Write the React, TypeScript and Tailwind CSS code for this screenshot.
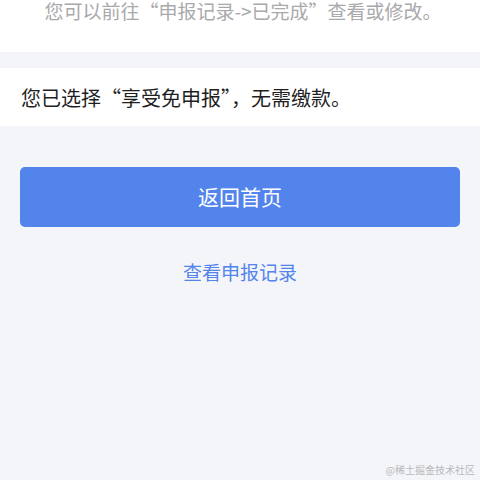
import React from "react";

const font = { fontFamily: '"Noto Sans CJK SC", "Noto Sans", sans-serif' };

export default function App() {
  return (
    <div className="w-[480px] h-[480px] bg-[#f4f5f9] flex flex-col relative overflow-hidden" style={font}>
      <div className="bg-white h-[52px] flex justify-center">
        <p className="text-[19px] leading-[22px] text-[#a9a9ab] pl-[6px] whitespace-nowrap">
          您可以前往“申报记录-&gt;已完成”查看或修改。
        </p>
      </div>
      <div className="h-[16px]" />
      <div className="bg-white h-[58px] flex items-center px-[21px] pt-[2px]">
        <p className="text-[20px] text-[#1f1f1f]">您已选择“享受免申报”，无需缴款。</p>
      </div>
      <div className="px-[20px] pt-[41px]">
        <button className="w-full h-[60px] rounded-[5px] bg-[#5284ec] text-white text-[21px] flex items-center justify-center">
          返回首页
        </button>
        <div className="flex justify-center mt-[31px]">
          <span className="text-[19px] text-[#5284ec]">查看申报记录</span>
        </div>
      </div>
      <div className="absolute right-[5px] bottom-[3px] text-[10px] text-[#b8b8bc]">@稀土掘金技术社区</div>
    </div>
  );
}
